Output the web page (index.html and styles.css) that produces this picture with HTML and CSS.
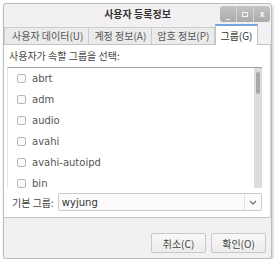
FILE: index.html
```html
<!DOCTYPE html>
<html>
<head>
    <title>사용자 등록정보</title>
    <link rel="stylesheet" href="styles.css">
</head>
<body>
    <div class="window">
        <div class="titlebar">
            <div></div>
            <div class="title">사용자 등록정보</div>
            <div class="wm-buttons">
                <span class="wm-btn">_</span>
                <span class="wm-btn"><span class="box"></span></span>
                <span class="wm-btn">x</span>
            </div>
        </div>

        <div class="tabs">
            <div class="tab">사용자 데이터(U)</div>
            <div class="tab">계정 정보(A)</div>
            <div class="tab">암호 정보(P)</div>
            <div class="tab active">그룹(G)</div>
        </div>

        <div class="panel">
            <div class="heading">사용자가 속할 그룹을 선택:</div>
            <div class="listbox">
                <div class="rows">
                    <div class="row"><span class="check"></span>abrt</div>
                    <div class="row"><span class="check"></span>adm</div>
                    <div class="row"><span class="check"></span>audio</div>
                    <div class="row"><span class="check"></span>avahi</div>
                    <div class="row"><span class="check"></span>avahi-autoipd</div>
                    <div class="row"><span class="check"></span>bin</div>
                </div>
                <div class="scrollbar"><div class="thumb"></div></div>
            </div>
            <div class="primary">
                <span class="label">기본 그룹:</span>
                <div class="combo">
                    <span class="value">wyjung</span>
                    <span class="arrow">
                        <svg width="8" height="5" viewBox="0 0 8 5"><path d="M1 1 L4 4 L7 1" fill="none" stroke="#777" stroke-width="1.3"/></svg>
                    </span>
                </div>
            </div>
        </div>

        <div class="actions">
            <button class="btn">취소(C)</button>
            <button class="btn">확인(O)</button>
        </div>
    </div>
</body>
</html>
```

FILE: styles.css
```css
body {
  margin: 0;
  background-color: #ffffff;
  font-family: "DejaVu Sans", "Noto Sans CJK KR", sans-serif;
  font-size: 10px;
  color: #444;
}

.window {
  margin: 3px 0 0 3px;
  width: 267px;
  height: 254px;
  background-color: #f2f0f2;
  border: 1px solid #bcbcbc;
  border-radius: 3px;
  box-shadow: 1px 2px 3px rgba(0, 0, 0, 0.22);
  display: flex;
  flex-direction: column;
}

.titlebar {
  height: 19px;
  display: grid;
  grid-template-columns: 1fr auto 1fr;
  align-items: center;
}

.title {
  font-family: "Noto Sans CJK KR", sans-serif;
  font-weight: bold;
  font-size: 10px;
  color: #333;
  white-space: nowrap;
}

.wm-buttons {
  display: flex;
  justify-self: end;
  margin-right: 1px;
  margin-top: 1px;
}

.wm-btn {
  width: 16px;
  height: 16px;
  background: linear-gradient(#c4c4c4, #aaaaaa);
  border-left: 1px solid #d4d4d4;
  color: #f4f4f4;
  font-family: "DejaVu Sans", sans-serif;
  font-size: 8px;
  font-weight: bold;
  line-height: 15px;
  text-align: center;
  display: flex;
  align-items: center;
  justify-content: center;
}

.wm-btn:first-child {
  border-left: 0;
  border-radius: 3px 0 0 3px;
  align-items: flex-end;
  line-height: 12px;
}

.wm-btn:last-child {
  border-radius: 0 3px 3px 0;
}

.box {
  width: 4px;
  height: 3px;
  border: 1px solid #f4f4f4;
}

.tabs {
  display: flex;
  align-items: flex-end;
  height: 22px;
  box-sizing: border-box;
  border-bottom: 1px solid #c4c4c4;
}

.tab {
  height: 16px;
  padding: 0 5px;
  border: 1px solid #cbcbcb;
  border-bottom: 0;
  border-left: 0;
  background-color: #ecebec;
  font-family: "Noto Sans CJK KR", sans-serif;
  font-size: 10px;
  color: #555;
  line-height: 16px;
  white-space: nowrap;
}

.tab:first-child {
  border-left: 1px solid #cbcbcb;
  padding-left: 7px;
}

.tab.active {
  height: 19px;
  margin-bottom: -1px;
  background-color: #ffffff;
  border: 1px solid #c4c4c4;
  border-top: 2px solid #72a3dc;
  border-bottom: 0;
  color: #333;
  padding: 0 4px;
  line-height: 19px;
}

.panel {
  height: 172px;
  background-color: #ffffff;
  border-bottom: 1px solid #c4c4c4;
  border-right: 1px solid #cfcfcf;
  padding: 0 8px 0 3px;
  display: flex;
  flex-direction: column;
}

.heading,
.label {
  font-family: "Noto Sans CJK KR", sans-serif;
  font-size: 10px;
  color: #444;
  white-space: nowrap;
}

.heading {
  margin-top: 1px;
  padding-left: 2px;
  height: 21px;
  line-height: 20px;
}

.listbox {
  height: 121px;
  box-sizing: border-box;
  border-top: 1px solid #a0a0a0;
  border-left: 1px solid #e4e4e4;
  display: flex;
}

.rows {
  flex: 1;
}

.row {
  height: 21px;
  display: flex;
  align-items: center;
  padding-left: 9px;
  color: #555;
  font-size: 10px;
}

.check {
  width: 7px;
  height: 7px;
  border: 1px solid #b8b8b8;
  border-radius: 2px;
  background-color: #fafafa;
  margin-right: 6px;
}

.scrollbar {
  width: 8px;
  background-color: #dcdcdc;
  padding-top: 4px;
  display: flex;
  justify-content: center;
}

.thumb {
  width: 4px;
  height: 22px;
  border-radius: 2px;
  background-color: #a9a9a9;
}

.primary {
  display: flex;
  align-items: center;
  margin-top: 5px;
  padding-left: 5px;
  gap: 4px;
}

.combo {
  flex: 1;
  height: 16px;
  border: 1px solid #cacaca;
  border-radius: 2px;
  background-color: #fcfafc;
  display: flex;
  align-items: center;
  padding-left: 3px;
  color: #333;
  font-size: 10px;
}

.value {
  flex: 1;
}

.arrow {
  width: 16px;
  height: 16px;
  border-left: 1px solid #e2e2e2;
  display: flex;
  align-items: center;
  justify-content: center;
}

.actions {
  display: flex;
  justify-content: flex-end;
  gap: 5px;
  padding: 15px 5px 0 0;
}

.btn {
  width: 55px;
  height: 20px;
  border: 1px solid #c8c8c8;
  border-radius: 2px;
  background: linear-gradient(#f8f8f8, #ececec);
  font-family: "Noto Sans CJK KR", sans-serif;
  font-size: 10px;
  color: #444;
  padding: 0;
}
```
